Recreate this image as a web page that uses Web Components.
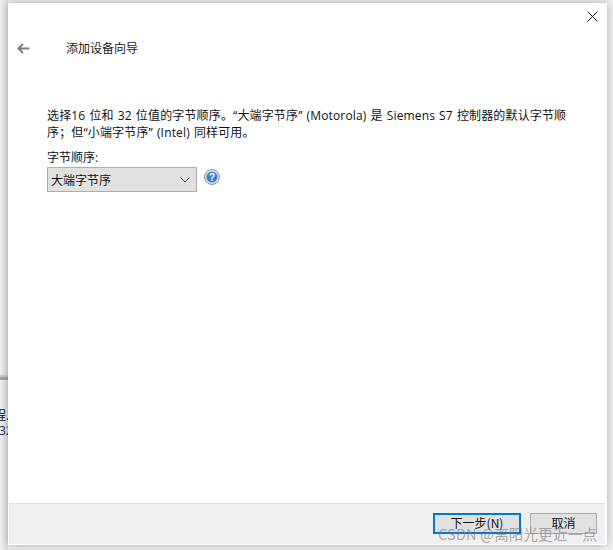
<!DOCTYPE html>
<html lang="zh">
<head>
<meta charset="utf-8">
<title>添加设备向导</title>
<style>
	html, body { margin: 0; height: 100%; }
	body { width: 613px; height: 550px; overflow: hidden; background: #fff; font-family: "Open Sans", "Noto Sans CJK SC", sans-serif; font-size: 12px; color: #111; }
</style>
</head>
<body>
<desktop-backdrop>
	<wizard-window>
		<wizard-header slot="head" title-text="添加设备向导"></wizard-header>
		<byte-order-page>
			选择16 位和 32 位值的字节顺序。“大端字节序” (Motorola) 是 Siemens S7 控制器的默认字节顺序；但“小端字节序” (Intel) 同样可用。
		</byte-order-page>
		<wizard-footer slot="foot"></wizard-footer>
	</wizard-window>
</desktop-backdrop>
<script>
	// the grey shadowed strip behind the dialog, with bits of the main window poking out
	class DesktopBackdrop extends HTMLElement {
		constructor() {
			super();
			this.attachShadow({ mode: 'open' }).innerHTML = `
			<style>
				:host { display: block; position: relative; width: 613px; height: 550px; overflow: hidden; box-sizing: border-box; padding: 3px 6px 5px 8px; background: #f0f0f0; }
				.left { position: absolute; left: 0; top: 0; width: 8px; height: 100%; background: linear-gradient(90deg, #f2f2f2, #dedede); }
				.rule { position: absolute; left: 0; top: 375px; width: 8px; height: 5px; background: linear-gradient(#d4d4d4, #c4c4c4 40%, #999 60%, #aaa); }
				.scrap { position: absolute; width: 14px; overflow: hidden; white-space: nowrap; font: 12px/14px "Noto Sans CJK SC", sans-serif; color: #111; }
				.scrap.a { top: 408px; left: -6px; }
				.scrap.b { top: 424px; left: -1px; width: 9px; color: #1d3a5e; font-family: "Open Sans", sans-serif; }
			</style>
			<div class="left"></div>
			<div class="rule"></div>
			<div class="scrap a">程.</div>
			<div class="scrap b">32</div>
			<slot></slot>`;
		}
	}

	class WizardWindow extends HTMLElement {
		constructor() {
			super();
			this.attachShadow({ mode: 'open' }).innerHTML = `
			<style>
				:host { display: flex; flex-direction: column; position: relative; height: 542px; box-sizing: border-box; padding-bottom: 1px; background: #fff; box-shadow: 0 0 9px rgba(0,0,0,.28); }
				main { flex: 1; min-height: 0; }
				.close { position: absolute; top: 8px; right: 9px; width: 11px; height: 11px; }
			</style>
			<slot name="head"></slot>
			<main><slot></slot></main>
			<slot name="foot"></slot>
			<svg class="close" viewBox="0 0 11 11"><path d="M.5.5l10 10M10.5.5l-10 10" stroke="#1a1a1a" stroke-width="1" fill="none"/></svg>`;
		}
	}

	class WizardHeader extends HTMLElement {
		constructor() {
			super();
			this.attachShadow({ mode: 'open' }).innerHTML = `
			<style>
				:host { display: flex; align-items: center; height: 90px; box-sizing: border-box; padding: 0 0 0 9px; }
				svg { width: 13px; height: 11px; margin-right: 36px; }
				span { font: 12px/16px "Noto Sans CJK SC", sans-serif; color: #1a1a1a; }
			</style>
			<svg viewBox="0 0 13 11"><path d="M12.5 5.5H1.5M6 1L1.5 5.5 6 10" stroke="#7f7f7f" stroke-width="2" fill="none"/></svg>
			<span></span>`;
			this.shadowRoot.querySelector('span').textContent = this.getAttribute('title-text');
		}
	}

	class ByteOrderPage extends HTMLElement {
		constructor() {
			super();
			this.attachShadow({ mode: 'open' }).innerHTML = `
			<style>
				:host { display: block; padding: 14px 30px 0 39px; }
				p { margin: 0 0 8px; width: 526px; line-height: 17px; font-size: 12px; letter-spacing: .15px; word-spacing: .8px; color: #111; }
				label { display: block; line-height: 17px; margin-bottom: 1px; }
				.row { display: flex; align-items: flex-start; gap: 7px; }
				.help { width: 16px; height: 16px; margin-top: 2px; }
			</style>
			<p><slot></slot></p>
			<label>字节顺序:</label>
			<div class="row">
				<combo-box>大端字节序</combo-box>
				<svg class="help" viewBox="0 0 16 16">
					<circle cx="8" cy="8" r="7.4" fill="#e8eef4" stroke="#7c8ea0" stroke-width="1"/>
					<circle cx="8" cy="8" r="5.6" fill="#3a7fd0"/>
					<text x="8" y="11.6" text-anchor="middle" font-family="Liberation Sans, sans-serif" font-weight="700" font-size="10" fill="#fff">?</text>
				</svg>
			</div>`;
		}
	}

	class ComboBox extends HTMLElement {
		constructor() {
			super();
			this.attachShadow({ mode: 'open' }).innerHTML = `
			<style>
				:host { display: flex; align-items: center; justify-content: space-between; width: 150px; height: 25px; box-sizing: border-box; border: 1px solid #adadad; background: #e1e1e1; padding: 0 6px 0 3px; font: 12px "Noto Sans CJK SC", sans-serif; color: #111; }
				svg { width: 10px; height: 6px; }
			</style>
			<slot></slot>
			<svg viewBox="0 0 10 6"><path d="M.5.5L5 5 9.5.5" stroke="#555" fill="none"/></svg>`;
		}
	}

	class WizardFooter extends HTMLElement {
		constructor() {
			super();
			this.attachShadow({ mode: 'open' }).innerHTML = `
			<style>
				:host { display: flex; position: relative; justify-content: flex-end; align-items: flex-start; gap: 9px; height: 41px; box-sizing: border-box; margin: 0 2px 0 1px; padding: 9px 8px 0 0; background: #f0f0f0; border-top: 1px solid #dfdfdf; }
				button { box-sizing: border-box; width: 88px; height: 21px; padding: 0 0 2px; background: #e1e1e1; border: 1px solid #adadad; font: 12px/15px "Noto Sans CJK SC", sans-serif; color: #111; }
				button.primary { border: 2px solid #0078d7; }
				button.cancel { width: 67px; }
				.mark { position: absolute; left: 429px; top: 20px; white-space: nowrap; font: 14.5px/20px "Noto Sans CJK SC", sans-serif; letter-spacing: .2px; color: rgba(120,120,120,.62); }
			</style>
			<button class="primary">下一步(N)</button>
			<button class="cancel">取消</button>
			<div class="mark">CSDN @离阳光更近一点</div>`;
		}
	}

	customElements.define('desktop-backdrop', DesktopBackdrop);
	customElements.define('wizard-window', WizardWindow);
	customElements.define('wizard-header', WizardHeader);
	customElements.define('byte-order-page', ByteOrderPage);
	customElements.define('combo-box', ComboBox);
	customElements.define('wizard-footer', WizardFooter);
</script>
</body>
</html>
